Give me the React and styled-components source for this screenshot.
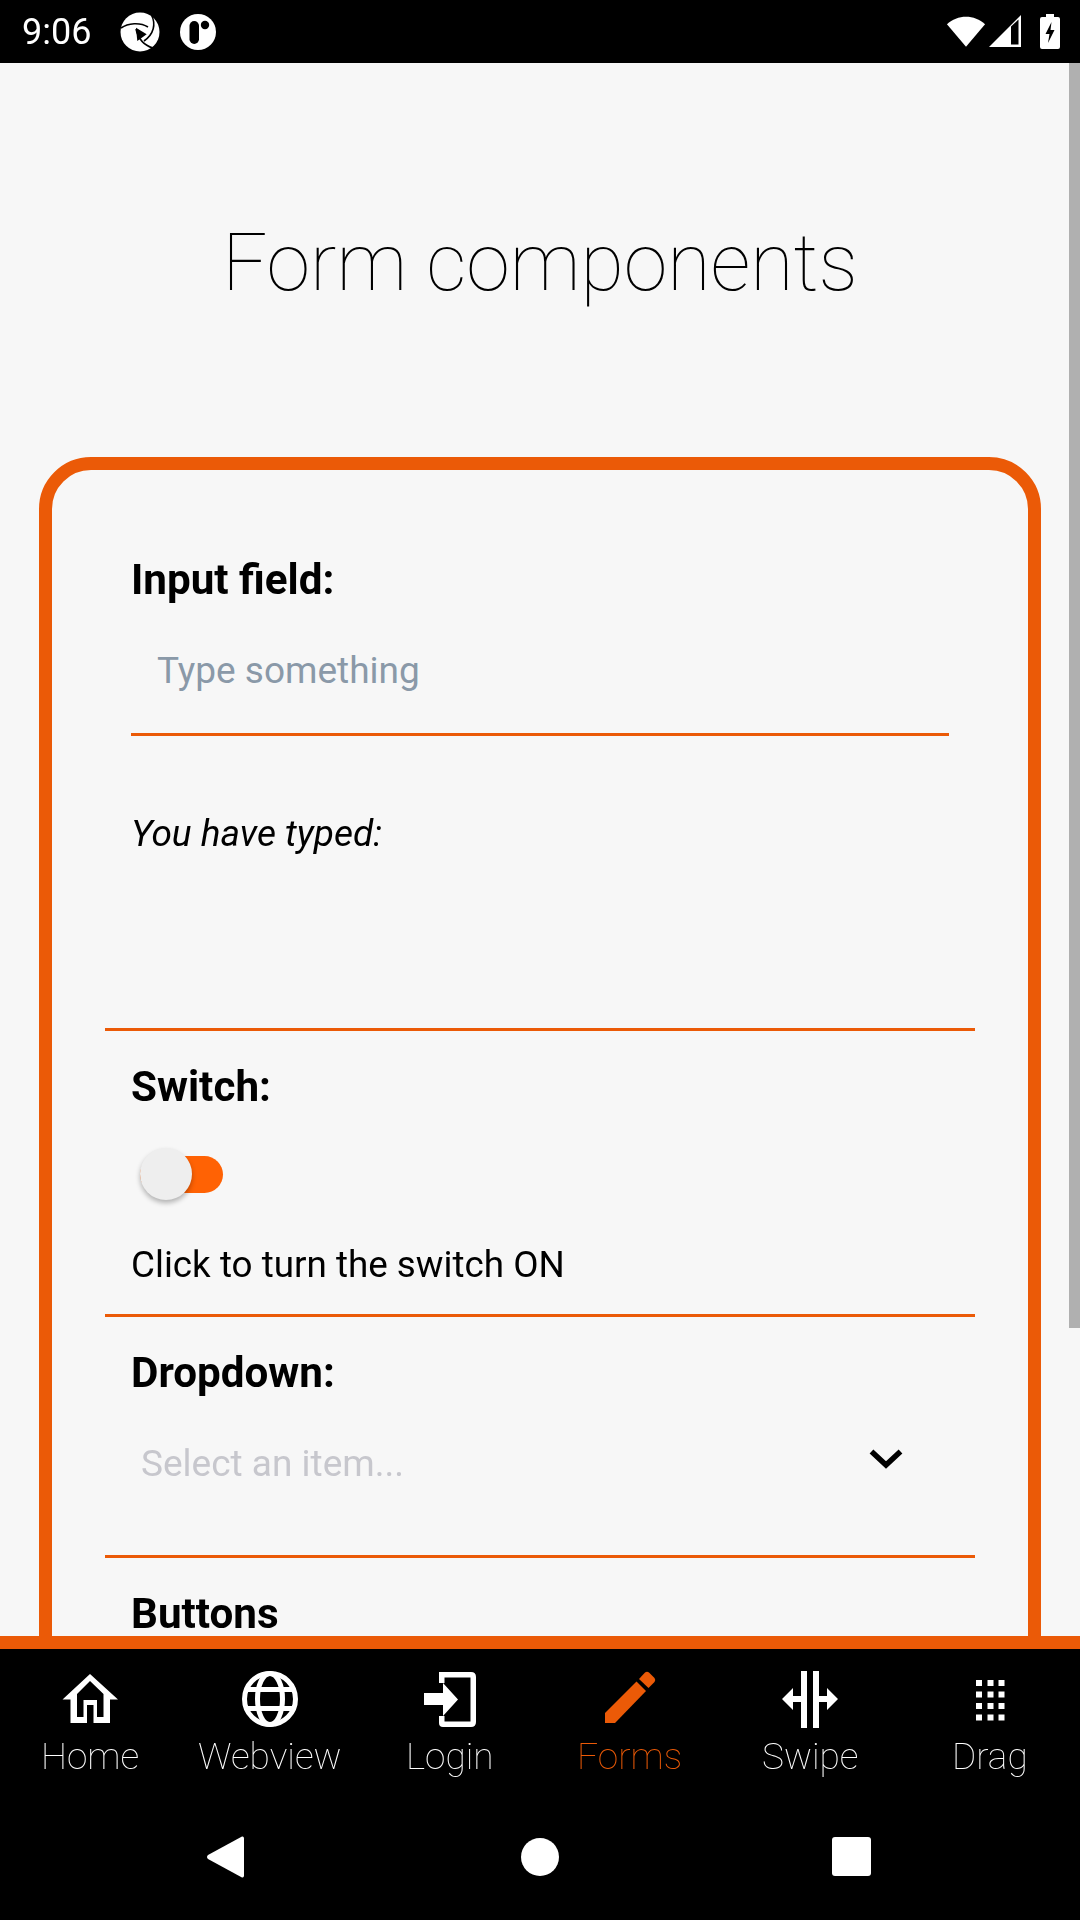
import React from 'react';
import styled, { createGlobalStyle } from 'styled-components';

const Global = createGlobalStyle`
  html, body { margin: 0; padding: 0; background: #000; }
  * { box-sizing: border-box; }
  body { font-family: Roboto, "Noto Sans", sans-serif; }
  h1, h2, p, span { will-change: transform; }
`;

const ORANGE = '#eb5a07';

const Screen = styled.div`
  width: 1080px; height: 1920px; display: flex; flex-direction: column; overflow: hidden; background: #000;
`;
const StatusBar = styled.header`
  height: 63px; flex: none; background: #000; color: #fff; display: flex; align-items: center;
  padding: 0 20px 0 22px;
`;
const Clock = styled.span`
  font-size: 36px; line-height: 40px; font-weight: 400; width: 98px;
`;
const StatusLeft = styled.div` display: flex; align-items: center; gap: 20px; `;
const StatusRight = styled.div` margin-left: auto; display: flex; align-items: center; `;
const Main = styled.main`
  height: 1586px; flex: none; position: relative; overflow: hidden; background: #f7f7f7;
  border-bottom: 13px solid ${ORANGE}; padding-top: 156px; display: flex; flex-direction: column;
`;
const Scrollbar = styled.div`
  position: absolute; right: 0; top: 0; width: 11px; height: 1265px; background: #b0b0b0;
`;
const Title = styled.h1`
  margin: 0 0 150px; font-size: 79px; line-height: 88px; font-weight: 100; text-align: center; color: #000; flex: none;
`;
const Card = styled.section`
  margin: 0 39px; flex: none; height: 1400px; border: 13px solid ${ORANGE}; border-radius: 52px; padding: 88px 53px 0;
`;
const Section = styled.div`
  height: ${p => p.$h}px; border-bottom: ${p => (p.$last ? 'none' : `3px solid ${ORANGE}`)}; padding: 0 26px;
`;
const Label = styled.h2`
  margin: 0; font-size: 42.2px; line-height: 44px; font-weight: 700; color: #000; padding-top: ${p => p.$pt || 0}px;
`;
const InputBox = styled.div`
  height: 134px; border-bottom: 3px solid ${ORANGE}; padding: 47px 26px 0; width: 818px;
  font-size: 37px; line-height: 44px; color: #8a99a8;
`;
const Typed = styled.p`
  margin: 76px 0 0; font-size: 37px; line-height: 44px; font-style: italic; color: #000;
`;
const SwitchTrack = styled.div`
  position: relative; margin: 47px 0 0 9px; width: 83px; height: 37px; border-radius: 19px; background: #ff6204;
`;
const SwitchThumb = styled.div`
  position: absolute; left: 0; top: -8px; width: 52px; height: 52px; border-radius: 50%; background: #eeeeee;
  box-shadow: 0 3px 5px rgba(0,0,0,0.28);
`;
const SwitchText = styled.p`
  margin: 50px 0 0; font-size: 36.8px; line-height: 44px; color: #000;
`;
const Select = styled.div`
  display: flex; align-items: flex-start; justify-content: space-between; padding: 47px 45px 0 10px;
`;
const SelectText = styled.span`
  font-size: 37px; line-height: 44px; color: #c7c7cd;
`;
const Chevron = styled.svg`
  width: 36px; height: 22px; margin-top: 6px; display: block;
`;
const BottomNav = styled.nav`
  height: 147px; flex: none; background: #000; display: grid; grid-template-columns: repeat(6, 180px); padding-top: 21px;
`;
const Tab = styled.div`
  display: flex; flex-direction: column; align-items: center; color: ${p => (p.$active ? ORANGE : '#fff')};
`;
const TabIcon = styled.svg`
  width: 64px; height: 64px; display: block; fill: currentColor;
`;
const TabLabel = styled.span`
  font-size: 37px; line-height: 40px; font-weight: 100; margin-top: 3px;
`;
const SystemNav = styled.div`
  flex: 1; background: #000; display: flex; align-items: flex-start; padding: 40px 0 0 206px;
`;
const Back = styled.svg` width: 40px; height: 42px; fill: #fff; display: block; `;
const Dot = styled.div` width: 38px; height: 38px; border-radius: 50%; background: #fff; margin: 2px 0 0 275px; `;
const Square = styled.div` width: 39px; height: 39px; border-radius: 3px; background: #fff; margin: 1px 0 0 273px; `;
const StatusIcon = styled.svg`
  display: block; margin-left: ${p => p.$ml || 0}px;
`;

const Aperture = () => (
  <svg width="40" height="40" viewBox="0 0 40 40">
    <circle cx="20" cy="20" r="19.5" fill="#fff" />
    <path d="M1 16 C 8 11 20 10 28 15 M31.5 3 C 36 12 34 22 24 29 M33 36 C 26 34 19 30 16 17" fill="none" stroke="#000" strokeWidth="1.6" />
    <path d="M16 15.700 L26.700 22.300 L17.300 29 Z" fill="#000" />
  </svg>
);
const LogoR = () => (
  <svg width="36" height="36" viewBox="0 0 36 36">
    <circle cx="18" cy="18" r="18" fill="#fff" />
    <rect x="9.5" y="7" width="9.5" height="23" rx="4.75" fill="#000" />
    <circle cx="25" cy="11" r="4.2" fill="#000" />
  </svg>
);
const Wifi = () => (
  <StatusIcon width="40" height="33" viewBox="0 0 42 34">
    <path d="M1 9.5 C 12 -1 30 -1 41 9.5 L 21 33 Z" fill="#fff" />
  </StatusIcon>
);
const Signal = () => (
  <StatusIcon width="34" height="33" viewBox="0 0 34 33" $ml={2}>
    <path d="M33 0 V32 H1 Z" fill="#fff" />
    <path d="M23 11.5 L30.5 4.5 V29.5 H23 Z" fill="#000" />
  </StatusIcon>
);
const Battery = () => (
  <StatusIcon width="20" height="35" viewBox="0 0 20 35" $ml={18}>
    <path d="M6 0 H14 V3 H18 Q20 3 20 5 V33 Q20 35 18 35 H2 Q0 35 0 33 V5 Q0 3 2 3 H6 Z" fill="#fff" />
    <path d="M11.5 8 L5.5 20 H9.5 L8 29 L14.5 16 H10.5 Z" fill="#000" />
  </StatusIcon>
);

const HomeIcon = () => (
  <TabIcon viewBox="0 0 64 64">
    <path fillRule="evenodd" d="M32 4 L60 29.500 H52 V53 H12.500 V29.500 H4.500 Z M32 11 L19 24 V47 H25.500 V30 H39 V47 H45.500 V24 Z M29 35 V53 H35.500 V35 Z" />
  </TabIcon>
);
const GlobeIcon = () => (
  <TabIcon viewBox="0 0 64 64" style={{ fill: 'none', stroke: 'currentColor' }} strokeWidth="5">
    <circle cx="32" cy="29" r="25.500" />
    <ellipse cx="32" cy="29" rx="12.500" ry="25.500" />
    <path d="M8 19.500 H56 M8 38.500 H56" />
  </TabIcon>
);
const LoginIcon = () => (
  <TabIcon viewBox="-3 0 64 64">
    <path d="M18 2 H50 Q55 2 55 7 V52 Q55 57 50 57 H22 Q18 57 18 53 V46 H23.500 V51.500 H49.500 V7.500 H23.500 V13 H18 Z" />
    <path d="M3 23 H22 V13 L37 29.500 L22 46 V35 H3 Z" />
  </TabIcon>
);
const PencilIcon = () => (
  <TabIcon viewBox="0 0 64 64">
    <path d="M7 43 L38.500 11.500 L48 21 L17 53 H7 Z" />
    <path d="M41 9 L47 2.500 Q49 1 51 2.500 L56.500 8 Q58 10 56.500 12 L50.500 18 Z" />
  </TabIcon>
);
const SwipeIcon = () => (
  <TabIcon viewBox="0 0 64 64">
    <rect x="23" y="1" width="6" height="57" />
    <rect x="35" y="1" width="6" height="57" />
    <path d="M4 29 L15 18 V26 H23 V32 H15 V40 Z" />
    <path d="M60 29 L49 18 V26 H41 V32 H49 V40 Z" />
  </TabIcon>
);
const DragIcon = () => (
  <TabIcon viewBox="0 0 64 64">
    {[10, 21.5, 33, 44.5].flatMap(y =>
      [18, 29.5, 40.500].map(x => <rect key={`${x}-${y}`} x={x} y={y} width="6" height="6" />)
    )}
  </TabIcon>
);

const tabs = [
  { name: 'Home', Icon: HomeIcon },
  { name: 'Webview', Icon: GlobeIcon },
  { name: 'Login', Icon: LoginIcon },
  { name: 'Forms', Icon: PencilIcon, active: true },
  { name: 'Swipe', Icon: SwipeIcon },
  { name: 'Drag', Icon: DragIcon },
];

export default function App() {
  return (
    <Screen>
      <Global />
      <StatusBar>
        <Clock>9:06</Clock>
        <StatusLeft><Aperture /><LogoR /></StatusLeft>
        <StatusRight><Wifi /><Signal /><Battery /></StatusRight>
      </StatusBar>
      <Main>
        <Scrollbar />
        <Title>Form components</Title>
        <Card>
          <Section $h={473}>
            <Label>Input field:</Label>
            <InputBox>Type something</InputBox>
            <Typed>You have typed:</Typed>
          </Section>
          <Section $h={286}>
            <Label $pt={34}>Switch:</Label>
            <SwitchTrack><SwitchThumb /></SwitchTrack>
            <SwitchText>Click to turn the switch ON</SwitchText>
          </Section>
          <Section $h={241}>
            <Label $pt={34}>Dropdown:</Label>
            <Select>
              <SelectText>Select an item...</SelectText>
              <Chevron viewBox="0 0 36 22"><path d="M3.500 3.500 L18 17 L32.500 3.500" fill="none" stroke="#000" strokeWidth="5.500" /></Chevron>
            </Select>
          </Section>
          <Section $h={100} $last>
            <Label $pt={34}>Buttons</Label>
          </Section>
        </Card>
      </Main>
      <BottomNav>
        {tabs.map(({ name, Icon, active }) => (
          <Tab key={name} $active={active}>
            <Icon />
            <TabLabel>{name}</TabLabel>
          </Tab>
        ))}
      </BottomNav>
      <SystemNav>
        <Back viewBox="0 0 40 42"><path d="M2 19 L36 0.500 Q38 0 38 2.500 V39.500 Q38 42 36 41.500 L2 23 Q0 21 2 19 Z" /></Back>
        <Dot />
        <Square />
      </SystemNav>
    </Screen>
  );
}
